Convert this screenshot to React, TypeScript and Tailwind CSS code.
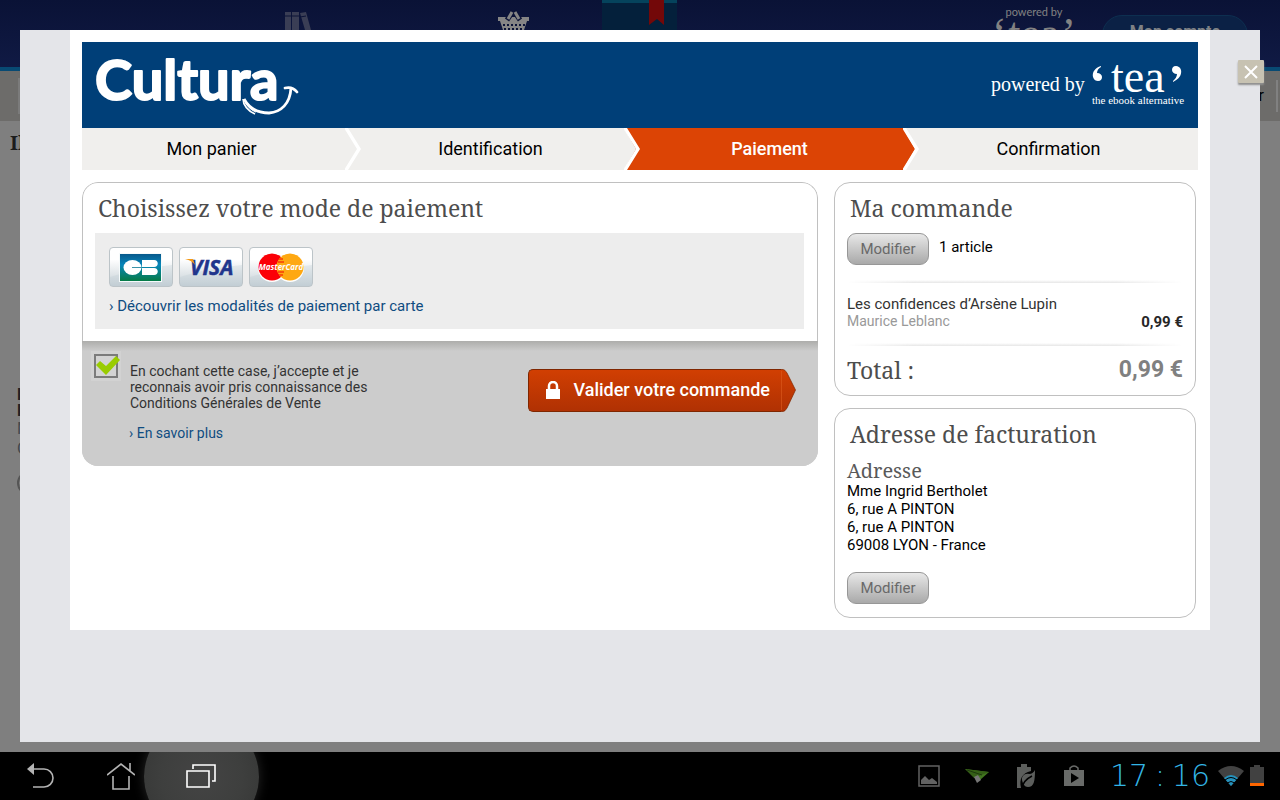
import React from "react";

const SERIF = "font-['Noto_Serif','Droid_Serif','DejaVu_Serif_Condensed','DejaVu_Serif',serif]";

function CulturaLogo() {
  return (
    <svg width="208" height="82" viewBox="0 0 208 82" role="img" aria-label="Cultura" className="shrink-0">
      <text x="1" y="56" fill="#fff" stroke="#fff" strokeWidth="2" strokeLinejoin="round" fontFamily="Lato, sans-serif" fontWeight="700" fontSize="56">
        Cultura
      </text>
      <path d="M150 55c5 9 14 14 25 14 12-1 21-9 22-25" fill="none" stroke="#fff" strokeWidth="2.8" />
      <path d="M149 55c0 6 5 12 12 15" fill="none" stroke="#fff" strokeWidth="1.6" />
      <path d="M151 58c3 5 6 8 11 10" fill="none" stroke="#fff" strokeWidth="1.2" />
      <path d="M191 44c4-1 8-1 12 4" fill="none" stroke="#fff" strokeWidth="2.8" strokeLinecap="round" />
    </svg>
  );
}

function TeaLogo() {
  return (
    <svg width="196" height="70" viewBox="0 0 196 70" role="img" aria-label="powered by tea" className="shrink-0" fill="#fff" fontFamily="'Liberation Serif', serif">
      <text x="0" y="41" fontSize="20">powered by</text>
      <text x="120" y="42" fontSize="46">tea</text>
      <path d="M110 16c-6 2-9 6-8 11 1 3 3 4 5 4 3 0 4-2 4-4s-2-4-5-4c0-3 2-5 4-6z" />
      <path d="M182 32c6-3 9-7 8-12-1-3-3-4-5-4-3 0-4 2-4 4s2 4 5 4c0 3-2 5-4 7z" />
      <text x="101" y="54" fontSize="11">the ebook alternative</text>
    </svg>
  );
}

type StepProps = { label: string; active?: boolean; next?: "grey" | "orange" };

function Step({ label, active, next }: StepProps) {
  return (
    <li
      aria-current={active ? "step" : undefined}
      className={
        active
          ? "flex h-[42px] items-center bg-[#dc4405] font-medium text-white"
          : "flex h-[42px] items-center bg-[#f0efed] text-black"
      }
    >
      <span className="flex-1 pl-1 pr-2 text-center text-lg">{label}</span>
      {next ? (
        <svg width="16" height="42" viewBox="0 0 16 42" aria-hidden="true">
          <rect width="16" height="42" fill={next === "orange" ? "#dc4405" : "#f0efed"} />
          <path d="M0 0L12 21L0 42Z" fill={active ? "#dc4405" : "#f0efed"} />
          <path d="M-1 0H3L16 21L3 42H-1L12 21Z" fill="#fff" />
        </svg>
      ) : (
        <span className="w-4" />
      )}
    </li>
  );
}

function CardTile({ children, label }: { children: React.ReactNode; label: string }) {
  return (
    <li className="rounded-sm border border-[#bcc4c8] bg-linear-to-b from-white from-30% to-[#c6d0d6]">
      <svg width="62" height="38" viewBox="0 0 62 38" role="img" aria-label={label} className="block">
        <path d="M0 29Q28 20 62 17V38H0Z" fill="#b9c7cf" opacity=".25" />
        {children}
      </svg>
    </li>
  );
}

function ModifyButton() {
  return (
    <button
      type="button"
      className="flex h-8 w-[82px] items-center justify-center rounded-[9px] border border-[#979797] bg-linear-to-b from-[#e8e8e8] to-[#a9a9a9] text-[15px] text-[#696969]"
    >
      Modifier
    </button>
  );
}

function Divider() {
  return <div className="h-[3px] bg-linear-to-b from-white to-[#e6e6e6] mask-x-from-80%" />;
}

function PanelTitle({ children }: { children: React.ReactNode }) {
  return <h2 className={`${SERIF} pb-2 pl-[3px] pt-2 text-[23px] leading-[34px] text-[#4d4d4d]`}>{children}</h2>;
}

function Backdrop() {
  return (
    <div aria-hidden="true" className="absolute inset-0 overflow-hidden bg-[#7f7f7f]">
      <div className="flex h-[71px] items-start border-b-4 border-[#084a73] bg-linear-to-b from-[#0a1236] to-[#101a44]">
        <svg width="420" height="30" viewBox="284 0 420 30" className="ml-[284px]">
          <g fill="#3a3e55">
            <path d="M285 12h6v18h-6zM292 12h7v18h-7zM300 13l6-1 5 18h-6z" />
          </g>
          <path d="M285 16h14M300 17l6-1" stroke="#0b1337" />
          <path d="M498 17h31v4h-2l-3 9h-21l-3-9h-2z" fill="#858585" />
          <path d="M507 20l6-9M520 20l-6-9" stroke="#0b1337" strokeWidth="5" />
          <path d="M508 19l4-7M519 19l-4-7" stroke="#858585" strokeWidth="3" />
          <path d="M503 25h22M504 29h20" stroke="#0b1337" strokeWidth="2" strokeDasharray="2 2" />
          <path d="M602 0h75v30h-75z" fill="#04203b" />
          <path d="M602 0h75v3h-75z" fill="#05435c" />
          <path d="M649 0h15v25l-7-6-8 6z" fill="#730809" />
        </svg>
        <div className="ml-[288px] w-[84px] pt-1 text-center text-[#828282]">
          <p className="font-['Lato',sans-serif] text-[11px] leading-4">powered by</p>
          <p className="flex justify-between font-['Liberation_Serif',serif] text-[44px] leading-7">
            <span>‘</span>
            <span>tea</span>
            <span>’</span>
          </p>
        </div>
        <div className="ml-[26px] mt-[15px] h-10 w-[146px] rounded-full border border-[#0d2f50] bg-[#0b2145] pt-1 text-center font-['Roboto',sans-serif] text-base font-bold text-[#7f8285]">
          Mon compte
        </div>
      </div>
      <div className="flex h-[50px] items-center justify-between bg-[#6d6c6a] text-black">
        <span className="ml-[18px] h-9 w-20 bg-[#7b7b7b]" />
        <span className="mr-[2px] border-r-2 border-[#818181] pr-3 font-['Roboto',sans-serif] text-base leading-8">Filtrer</span>
      </div>
      <p className={`${SERIF} pl-[10px] pt-2 text-xl font-bold leading-7 text-[#1c1c1c]`}>Il y a</p>
      <div className="pl-[17px] pt-[230px] font-['Roboto',sans-serif] text-base text-[#42484e]">
        <p className="font-bold leading-4 text-[#202024]">Le</p>
        <p className="font-bold leading-4 text-[#202024]">Les</p>
        <p className="leading-5">Ma</p>
        <p className="leading-5">Ge</p>
        <p className="mt-3 size-6 rounded-full border-2 border-[#555]" />
      </div>
    </div>
  );
}

function PaymentPanel() {
  return (
    <section className="min-w-0 flex-1 self-start overflow-hidden rounded-2xl">
      <div className="rounded-t-2xl border border-b-0 border-[#c0c0c0] px-3 pb-3">
        <PanelTitle>Choisissez votre mode de paiement</PanelTitle>
        <div className="mr-px h-24 bg-[#ededed] px-[14px] pt-[14px]">
          <ul className="flex gap-[6px]">
            <CardTile label="CB">
              <defs>
                <linearGradient id="cb" x1="0" y1="0" x2="0" y2="1">
                  <stop offset="0" stopColor="#07598c" />
                  <stop offset=".4" stopColor="#0786ba" />
                  <stop offset="1" stopColor="#067b46" />
                </linearGradient>
              </defs>
              <rect x="9" y="5" width="43" height="29" fill="#f5fafb" />
              <rect x="10" y="6" width="41" height="27" fill="url(#cb)" />
              <ellipse cx="22.500" cy="19.500" rx="9" ry="7.500" fill="#fff" />
              <path d="M22 19.500h10" stroke="#3b93a8" />
              <path d="M32 12h12c5 0 5 7 0 7H32zM32 20h12c5 0 5 7 0 7H32z" fill="#fff" />
            </CardTile>
            <CardTile label="Visa">
              <text x="10" y="27" fontFamily="'Open Sans', sans-serif" fontSize="21" fontWeight="700" fontStyle="italic" fill="#21358c" stroke="#21358c" strokeWidth=".5">VISA</text>
              <path d="M5 11h8l2 6c-2-3-5-5-10-6z" fill="#f39a18" />
            </CardTile>
            <CardTile label="MasterCard">
              <circle cx="22" cy="20" r="14" fill="#fff" />
              <circle cx="40" cy="20" r="14" fill="#fff" />
              <circle cx="22" cy="19" r="13.500" fill="#fb0007" />
              <circle cx="40" cy="19" r="13.500" fill="#fea812" />
              <path d="M29 11h4M28 14h6M28 24h6M29 27h4" stroke="#f8560a" strokeWidth="2" />
              <text x="31" y="22" textAnchor="middle" fontFamily="'Open Sans', sans-serif" fontSize="8" fontWeight="700" fontStyle="italic" fill="#fff">MasterCard</text>
            </CardTile>
          </ul>
          <a href="#modalites" className="mt-2 block text-[15px] leading-[22px] text-[#0f4c81]">› Découvrir les modalités de paiement par carte</a>
        </div>
      </div>
      <div className="flex h-[125px] items-start bg-[#cccccc] bg-linear-to-b from-[#adadab] to-[#cccccc] to-[10px] pl-[9px] pr-[22px]">
        <div className="mt-[10px] grid size-[30px] place-items-center bg-[#d2d2d2]">
          <input id="cgv" type="checkbox" defaultChecked className="peer col-start-1 row-start-1 size-6 appearance-none border-2 border-[#7b7b7b] bg-[#d3d3d3]" />
          <svg width="30" height="30" viewBox="0 0 30 30" aria-hidden="true" className="pointer-events-none invisible z-10 col-start-1 row-start-1 peer-checked:visible">
            <path d="M5 14l4-4 6 5 10-10 4 4-14 15z" fill="#99cc00" />
          </svg>
        </div>
        <div className="ml-2 mt-[22px] flex-1 text-sm">
          <label htmlFor="cgv" className="block w-[260px] pl-px leading-4 text-[#333]">
            En cochant cette case, j’accepte et je reconnais avoir pris connaissance des Conditions Générales de Vente
          </label>
          <a href="#cgv-detail" className="mt-3 block leading-5 text-[#0f4c81]">› En savoir plus</a>
        </div>
        <button type="submit" className="mt-7 flex h-[43px] text-white">
          <span className="flex h-full items-center gap-3 rounded-l-[5px] border-y border-l border-[#7f2600] bg-linear-to-b from-[#d13f02] to-[#b03103] pb-px pl-4 pr-[11px] text-lg font-medium">
            <svg width="16" height="18" viewBox="0 0 16 18" aria-hidden="true" fill="#fff">
              <path d="M1 8h14v10H1z" />
              <path d="M4 9V5a4 4 0 018 0v4" fill="none" stroke="#fff" strokeWidth="2.500" />
            </svg>
            Valider votre commande
          </span>
          <svg width="15" height="43" viewBox="0 0 15 43" aria-hidden="true">
            <defs>
              <linearGradient id="tip" x1="0" y1="0" x2="0" y2="1">
                <stop offset="0" stopColor="#d13f02" />
                <stop offset="1" stopColor="#b03103" />
              </linearGradient>
            </defs>
            <path d="M-1 .5H2Q4 .5 6 4L14.500 21L6 39Q4 42.500 2 42.500H-1Z" fill="url(#tip)" stroke="#7f2600" strokeOpacity=".7" />
            <path d="M.5 2V41" stroke="#dc5c20" strokeOpacity=".6" />
          </svg>
        </button>
      </div>
    </section>
  );
}

function OrderPanel() {
  return (
    <section className="h-[214px] rounded-2xl border border-[#c0c0c0] px-3">
      <PanelTitle>Ma commande</PanelTitle>
      <div className="flex items-start gap-[10px]">
        <ModifyButton />
        <p className="text-[15px] leading-7">1 article</p>
      </div>
      <div className="pt-[15px]"><Divider /></div>
      <div className="flex items-end justify-between pt-3 leading-[18px]">
        <div>
          <p className="text-[15px] text-[#333]">Les confidences d’Arsène Lupin</p>
          <p className="text-sm leading-4 text-[#999]">Maurice Leblanc</p>
        </div>
        <p className="text-[15px] font-bold leading-[14px] text-[#262626]">0,99 €</p>
      </div>
      <div className="pt-[14px]"><Divider /></div>
      <div className="flex items-center justify-between pt-1 text-[23px] leading-10">
        <p className={`${SERIF} text-[#4d4d4d]`}>Total :</p>
        <p className="font-bold text-[#808080]">0,99 €</p>
      </div>
    </section>
  );
}

function AddressPanel() {
  return (
    <section className="rounded-2xl border border-[#c0c0c0] px-3 pb-[13px]">
      <PanelTitle>Adresse de facturation</PanelTitle>
      <h3 className={`${SERIF} text-xl leading-[23px] text-[#595959]`}>Adresse</h3>
      <address className="pb-[18px] text-[15px] not-italic leading-[18px]">
        Mme Ingrid Bertholet
        <br />
        6, rue A PINTON
        <br />
        6, rue A PINTON
        <br />
        69008 LYON - France
      </address>
      <ModifyButton />
    </section>
  );
}

function SystemBar() {
  return (
    <nav aria-label="Système" className="relative flex h-12 shrink-0 items-center justify-between overflow-hidden bg-black">
      <div className="flex pl-px">
        <button type="button" aria-label="Retour" className="flex h-12 w-20 items-center justify-center">
          <svg width="28" height="28" viewBox="0 0 28 28" fill="none" stroke="#b4b4b4" strokeWidth="1.600">
            <path d="M6 7h11a9 9 0 010 18H6" />
            <path d="M0 7l7-6v12z" fill="#b4b4b4" stroke="none" />
          </svg>
        </button>
        <button type="button" aria-label="Accueil" className="flex h-12 w-20 items-center justify-center">
          <svg width="28" height="28" viewBox="0 0 28 28" fill="none" stroke="#b4b4b4" strokeWidth="1.600">
            <path d="M0 13L14 2l14 11M6 14v13h16V14M23 1v8" />
          </svg>
        </button>
        <button type="button" aria-label="Applications récentes" className="flex h-12 w-20 items-center justify-center">
          <span className="absolute size-[115px] rounded-full bg-radial from-[#444] via-[#3e3f3e] to-[#333433] shadow-[0_0_12px_#252525]" />
          <svg width="30" height="26" viewBox="0 0 30 26" fill="none" stroke="#fff" strokeWidth="1.600" className="relative">
            <path d="M1 8h22v16H1zM7 6V2h22v16h-3" />
          </svg>
        </button>
      </div>
      <div className="flex items-center pr-4">
        <svg width="22" height="22" viewBox="0 0 22 22" fill="none" stroke="#626262" strokeWidth="1.500" aria-hidden="true">
          <path d="M1 1h20v20H1z" />
          <path d="M3 19v-4l4-4 4 4 3-2 5 4v2z" fill="#626262" stroke="none" />
        </svg>
        <svg width="24" height="16" viewBox="0 0 24 16" className="ml-[25px]" aria-hidden="true">
          <path d="M0 1l24 3-9 8z" fill="#42751f" />
          <path d="M0 1l9 9L24 4z" fill="#355f17" />
          <path d="M9 9l4-2 3 5-4 3z" fill="#777" />
          <path d="M2 2l15 5" stroke="#1e380e" />
        </svg>
        <svg width="20" height="24" viewBox="0 0 20 24" className="ml-[27px]" aria-hidden="true" fill="#5c5e5c">
          <path d="M1 3h4V0h6v3h4v4C6 9 3 15 5 24H1z" />
          <path d="M19 6c0 11-1 17-7 17-2 0-3-1-4-2C3 13 8 9 13 10c3 0 5-2 6-4z" />
          <path d="M6 24c1-6 4-9 10-12" fill="none" stroke="#000" strokeWidth="1.500" />
        </svg>
        <svg width="20" height="22" viewBox="0 0 20 22" className="ml-7" aria-hidden="true">
          <path d="M0 5h20v16H0z" fill="#696b69" />
          <path d="M6 6V3q4-4 8 0v3" fill="none" stroke="#696b69" strokeWidth="1.500" />
          <path d="M7 8l8 5-8 5z" fill="#000" />
        </svg>
        <time className="ml-[26px] flex w-[100px] justify-between font-['DejaVu_Sans',sans-serif] text-[30px] font-extralight leading-8 text-[#33b5e5]">
          <span>17</span>
          <span>:</span>
          <span>16</span>
        </time>
        <svg width="26" height="20" viewBox="0 0 26 20" className="ml-2" aria-hidden="true">
          <path d="M0 5Q13-5 26 5L13 20Z" fill="#424242" />
          <path d="M6 12Q13 6 20 12L13 20Z" fill="#2592bd" />
          <path d="M7 14Q13 9 19 14M9 17Q13 14 17 17" stroke="#000" fill="none" />
        </svg>
        <svg width="14" height="22" viewBox="0 0 14 22" className="ml-[6px]" aria-hidden="true">
          <path d="M0 2h4V0h6v2h4v16H0z" fill="#414141" />
          <path d="M0 18h14v3H0z" fill="#ff6600" />
        </svg>
      </div>
    </nav>
  );
}

export default function App() {
  return (
    <div className="flex min-h-screen flex-col font-['Roboto',sans-serif] text-black">
      <div className="relative flex flex-1 flex-col px-5 pb-[10px] pt-[30px]">
        <Backdrop />
        <main role="dialog" aria-label="Paiement" className="relative flex-1 bg-[#e4e5e9] px-[50px]">
          <button
            type="button"
            aria-label="Fermer"
            className="absolute -right-1 top-[30px] grid h-[23px] w-[26px] place-items-center rounded-[1px] bg-[#c7c2b2] shadow-[0_2px_2px_#8f8f8f]"
          >
            <svg width="14" height="16" viewBox="0 0 14 16" stroke="#fff" strokeWidth="2">
              <path d="M1 2l12 12M13 2L1 14" />
            </svg>
          </button>
          <div className="bg-white p-3">
            <header className="flex h-[86px] items-center justify-between bg-[#003f78] pl-3 pr-[11px]">
              <CulturaLogo />
              <TeaLogo />
            </header>
            <ol className="grid grid-cols-4">
              <Step label="Mon panier" next="grey" />
              <Step label="Identification" next="orange" />
              <Step label="Paiement" active next="grey" />
              <Step label="Confirmation" />
            </ol>
            <div className="flex gap-4 pr-[2px] pt-3">
              <PaymentPanel />
              <aside className="flex w-[362px] shrink-0 flex-col gap-3">
                <OrderPanel />
                <AddressPanel />
              </aside>
            </div>
          </div>
        </main>
      </div>
      <SystemBar />
    </div>
  );
}
